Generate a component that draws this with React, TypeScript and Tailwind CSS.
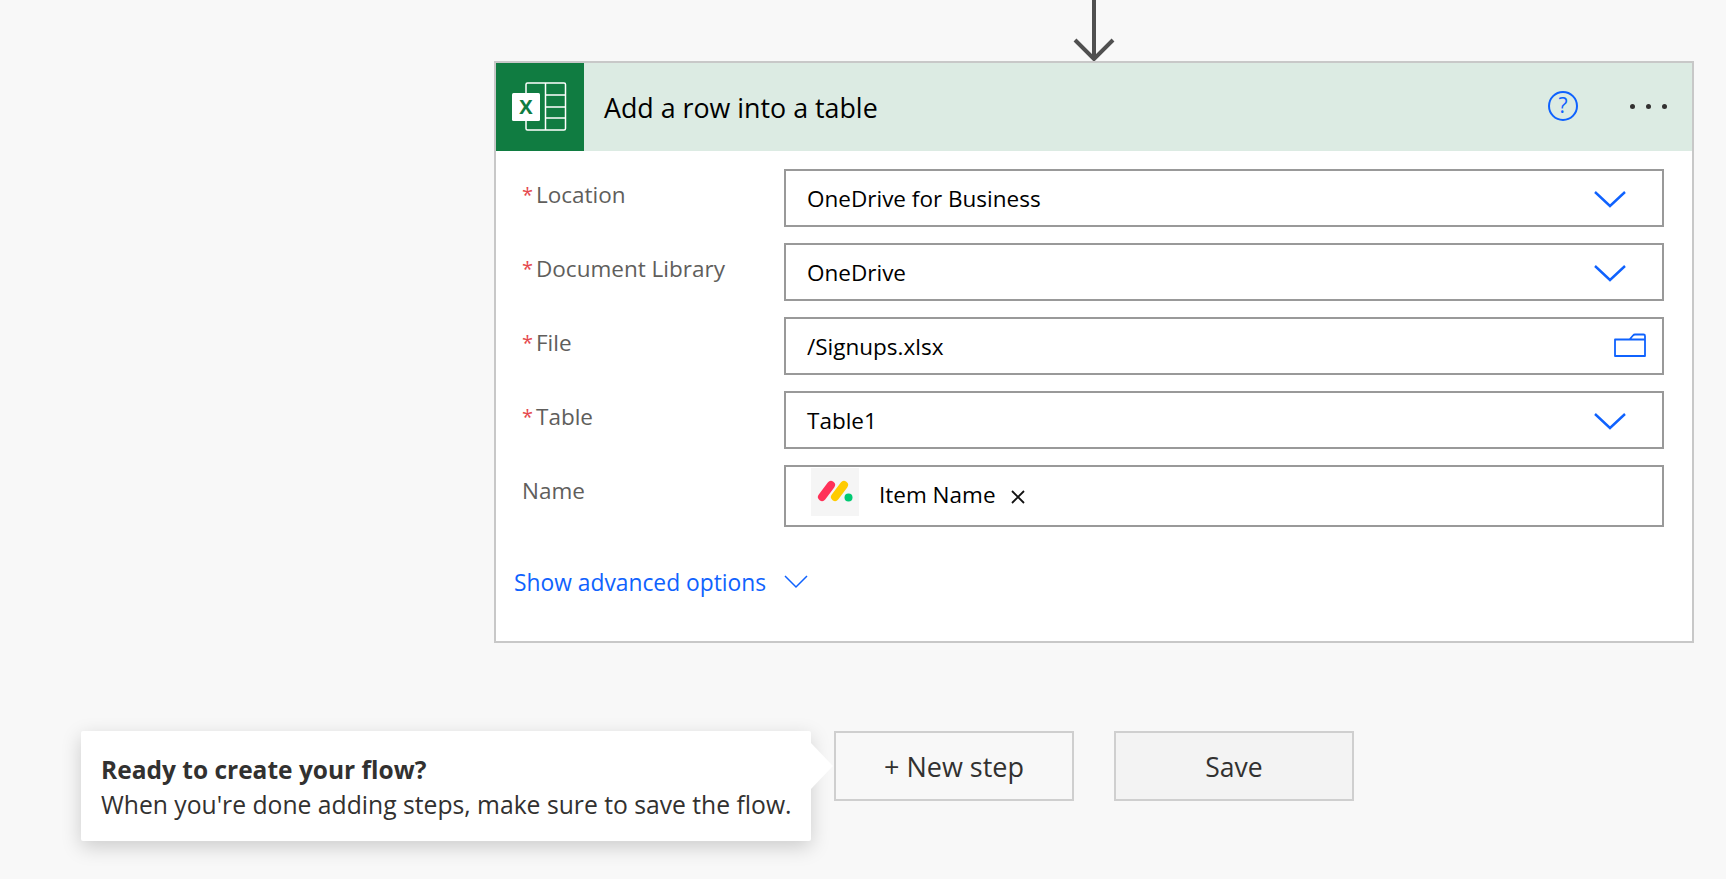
import { ReactNode } from 'react';

const Chevron = () => (
  <svg width="32" height="18" viewBox="0 0 32 18" fill="none" className="shrink-0 mr-[21px] mt-[2px]">
    <path d="M1 2 16 16 31 2" stroke="#0f62fe" strokeWidth="2.400" />
  </svg>
);

const Folder = () => (
  <svg width="32" height="24" viewBox="0 0 32 24" fill="none" className="shrink-0 -mt-[3px] mr-[1px]">
    <path
      d="M1 6.500h14.500L19 2.500c.6-.7 1.200-1 2-1h8.500c.9 0 1.500.6 1.500 1.500V23H1ZM15.500 6.500l3 0H31"
      stroke="#0f62fe"
      strokeWidth="1.800"
      strokeLinejoin="round"
    />
  </svg>
);

const ExcelIcon = () => (
  <svg width="56" height="50" viewBox="0 0 56 50" fill="none">
    <rect x="14" y="1" width="39.500" height="47" rx="1.500" stroke="#fff" strokeWidth="1.500" />
    <path d="M33.500 1v47M33.500 13h20M33.500 25h20M33.500 36h20" stroke="#fff" strokeWidth="1.500" />
    <rect x="0" y="11" width="28" height="28" rx="1.500" fill="#fff" />
    <text x="14" y="32" textAnchor="middle" fontSize="20" fontWeight="700" fill="#107c41" fontFamily="'Open Sans', sans-serif">
      X
    </text>
  </svg>
);

const MondayLogo = () => (
  <svg width="48" height="48" viewBox="0 0 48 48" fill="none">
    <path d="M11 29 20 17" stroke="#ff3158" strokeWidth="8" strokeLinecap="round" />
    <path d="M24 29 33 17" stroke="#ffcb00" strokeWidth="8" strokeLinecap="round" />
    <circle cx="37.500" cy="29.500" r="4" fill="#00ca72" />
  </svg>
);

function Row({ label, required = true, tall = false, children }: { label: string; required?: boolean; tall?: boolean; children: ReactNode }) {
  return (
    <div className="flex">
      <div className="w-[288px] pl-[26px] pt-[11px] text-[22.500px] leading-[30px] text-[#605e5c] flex">
        {required && <span className="text-[#e5484d] w-[14px] text-[20px]">*</span>}
        <span>{label}</span>
      </div>
      <div
        className={`w-[880px] border-2 border-[#999999] flex items-center text-[22.500px] text-black ${
          tall ? 'h-[62px] pl-[25px]' : 'h-[58px] pl-[21px] pr-[15px] justify-between'
        }`}
      >
        {children}
      </div>
    </div>
  );
}

export default function App() {
  return (
    <div className="min-h-screen bg-[#f8f8f8] font-['Open_Sans',sans-serif] overflow-hidden">
      {/* connector arrow */}
      <div className="h-[61px] w-[1199px] ml-[494px] flex justify-center">
        <svg width="42" height="61" viewBox="0 0 42 61" fill="none">
          <path d="M21 0v59M2 40l19 19 19-19" stroke="#505050" strokeWidth="4" />
        </svg>
      </div>

      {/* action card */}
      <div className="w-[1200px] h-[582px] ml-[494px] border-2 border-[#c8c8c8] bg-white">
        <div className="h-[88px] bg-[#dcebe3] flex items-center">
          <div className="w-[88px] h-[88px] bg-[#107c41] flex items-center justify-center pr-[1px]">
            <ExcelIcon />
          </div>
          <div className="ml-[20px] text-[26.800px] text-black flex-1 mt-[2px]">Add a row into a table</div>
          <div className="w-[30px] h-[30px] rounded-full border-2 border-[#0f62fe] mr-[52px] -mt-[3px] flex items-center justify-center text-[21px] leading-none text-[#0f62fe]">
            ?
          </div>
          <div className="flex gap-[11px] mr-[25px] -mt-[1px]">
            <div className="w-[5px] h-[5px] rounded-full bg-[#323130]" />
            <div className="w-[5px] h-[5px] rounded-full bg-[#323130]" />
            <div className="w-[5px] h-[5px] rounded-full bg-[#323130]" />
          </div>
        </div>

        <div className="pt-[18px] flex flex-col gap-[16px]">
          <Row label="Location">
            <span className="mt-[1px]">OneDrive for Business</span>
            <Chevron />
          </Row>
          <Row label="Document Library">
            <span className="mt-[1px]">OneDrive</span>
            <Chevron />
          </Row>
          <Row label="File">
            <span className="mt-[1px]">/Signups.xlsx</span>
            <Folder />
          </Row>
          <Row label="Table">
            <span className="mt-[1px]">Table1</span>
            <Chevron />
          </Row>
          <Row label="Name" required={false} tall>
            <div className="w-[48px] h-[48px] bg-[#f5f5f5] flex items-center justify-center -mt-[8px]">
              <MondayLogo />
            </div>
            <span className="ml-[20px] -mt-[3px]">Item Name</span>
            <svg width="14" height="14" viewBox="0 0 14 14" fill="none" className="ml-[15px] mt-[1px]">
              <path d="M1 1 13 13M13 1 1 13" stroke="#111" strokeWidth="1.800" />
            </svg>
          </Row>
        </div>

        <div className="mt-[39px] ml-[18px] flex items-center text-[22.800px] text-[#0f62fe]">
          <span>Show advanced options</span>
          <svg width="24" height="14" viewBox="0 0 24 14" fill="none" className="ml-[18px] -mt-[3px]">
            <path d="M1 1 12 12 23 1" stroke="#0f62fe" strokeWidth="1.500" />
          </svg>
        </div>
      </div>

      {/* bottom actions */}
      <div className="relative mt-[88px] ml-[834px] flex gap-[40px] text-[26.500px] text-[#323130]">
        <button className="w-[240px] h-[70px] border-2 border-[#cfcfcf] bg-[#f8f8f8] pt-[2px] text-[27px]">+ New step</button>
        <button className="w-[240px] h-[70px] border-2 border-[#cfcfcf] bg-[#f3f3f3] pt-[4px]">Save</button>

        {/* teaching bubble */}
        <div className="absolute right-[calc(100%+23px)] top-0 w-[730px] h-[110px] bg-white rounded-[2px] shadow-[0_6px_20px_rgba(0,0,0,0.18)] pl-[20px] pt-[22px] text-[#323130]">
          <div className="text-[24.500px] leading-[34px] font-bold whitespace-nowrap">Ready to create your flow?</div>
          <div className="text-[24.700px] leading-[36px] whitespace-nowrap">When you're done adding steps, make sure to save the flow.</div>
          <div className="absolute left-full top-[12px] w-0 h-0 border-y-[23px] border-y-transparent border-l-[22px] border-l-white" />
        </div>
      </div>
    </div>
  );
}
